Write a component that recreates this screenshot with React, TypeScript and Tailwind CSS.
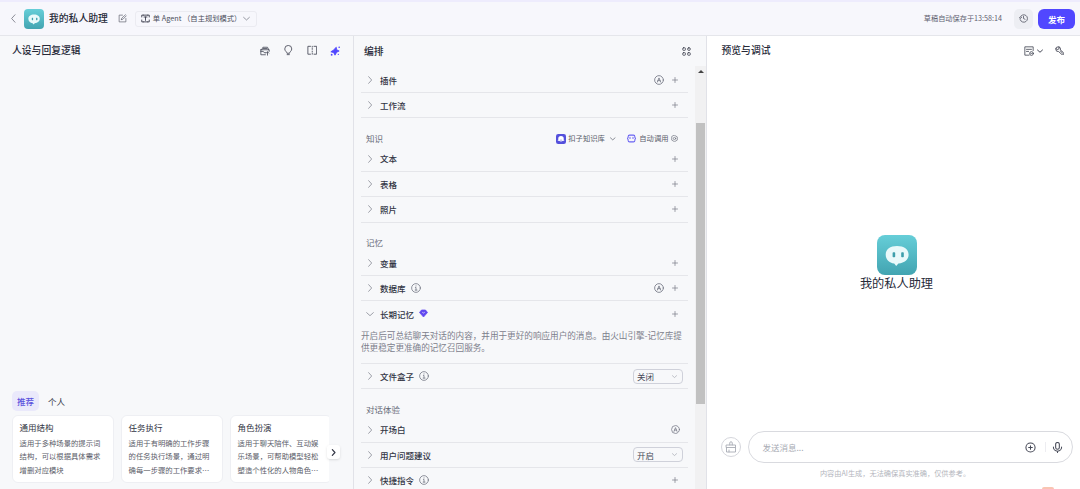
import React, { useState } from 'react';
import clsx from 'clsx';

type RowAction = 'plus' | 'auto' | 'auto-plus' | 'select';

interface SkillRow {
    label: string;
    action: RowAction;
    info?: boolean;
    value?: string;
}

const skillRows: SkillRow[] = [
    { label: '插件', action: 'auto-plus' },
    { label: '工作流', action: 'plus' },
];

const knowledgeRows: SkillRow[] = [
    { label: '文本', action: 'plus' },
    { label: '表格', action: 'plus' },
    { label: '照片', action: 'plus' },
];

const memoryRows: SkillRow[] = [
    { label: '变量', action: 'plus' },
    { label: '数据库', action: 'auto-plus', info: true },
];

const chatRows: SkillRow[] = [
    { label: '开场白', action: 'auto' },
    { label: '用户问题建议', action: 'select', value: '开启' },
    { label: '快捷指令', action: 'plus', info: true },
];

const templates = [
    { title: '通用结构', lines: ['适用于多种场景的提示词', '结构，可以根据具体需求', '增删对应模块'] },
    { title: '任务执行', lines: ['适用于有明确的工作步骤', '的任务执行场景，通过明', '确每一步骤的工作要求…'] },
    { title: '角色扮演', lines: ['适用于聊天陪伴、互动娱', '乐场景，可帮助模型轻松', '塑造个性化的人物角色…'] },
];

interface IconProps {
    size?: number;
    width?: number;
    className?: string;
    children: React.ReactNode;
}

function Icon({ size = 10, width = 1.8, className, children }: IconProps) {
    return (
        <svg
            width={size}
            height={size}
            viewBox="0 0 24 24"
            fill="none"
            stroke="currentColor"
            strokeWidth={width}
            strokeLinecap="round"
            strokeLinejoin="round"
            className={clsx('shrink-0', className)}
        >
            {children}
        </svg>
    );
}

function Chevron({ dir, size = 8, width = 2, className }: { dir: 'left' | 'right' | 'down'; size?: number; width?: number; className?: string }) {
    const paths = { left: 'M16 2 7 12l9 10', right: 'M8 2l9 10-9 10', down: 'M2 8l10 9 10-9' };
    return <Icon size={size} width={width} className={className}><path d={paths[dir]} /></Icon>;
}

function PlusIcon() {
    return <Icon size={6} width={3} className="text-[#7d808c]"><path d="M12 2v20M2 12h20" /></Icon>;
}

function AutoIcon({ size = 10 }: { size?: number }) {
    return (
        <Icon size={size} width={2} className="text-[#747784]">
            <circle cx="12" cy="12" r="10.5" />
            <path d="M8 17l4-10 4 10M9.5 13.5h5" />
        </Icon>
    );
}

function InfoIcon() {
    return (
        <Icon size={10} width={1.9} className="text-[#747784]">
            <circle cx="12" cy="12" r="10.5" />
            <path d="M10.5 10.5H12V17M10 17h4.5M12 6.8v.4" />
        </Icon>
    );
}

// Logo do assistente: balão com dois olhos
function BotLogo({ size, id }: { size: number; id: string }) {
    return (
        <svg width={size} height={size} viewBox="0 0 40 40" className="shrink-0">
            <defs>
                <linearGradient id={id} x1="0" y1="0" x2="0" y2="1">
                    <stop offset="0" stopColor="#66ced8" />
                    <stop offset="1" stopColor="#42a4b1" />
                </linearGradient>
            </defs>
            <rect width="40" height="40" rx="8" fill={`url(#${id})`} />
            <path d="M20 11c-6.800 0-11.300 3.400-11.300 8.700 0 4.900 3.600 8.100 8.500 8.800l2 2.400 2.200-2.400c6.200-.6 10.200-3.900 10.200-8.800 0-5.300-4.600-8.700-11.600-8.700z" fill="#e9f9fa" />
            <rect x="15.600" y="17.300" width="2.600" height="5" rx=".8" fill="#3d9eab" />
            <rect x="24.200" y="17.300" width="2.600" height="5" rx=".8" fill="#3d9eab" />
        </svg>
    );
}

function Select({ value }: { value: string }) {
    return (
        <button className="mr-[5px] flex h-[15px] w-[50px] items-center justify-between rounded-[4px] border border-[#cfd1da] pr-[5px] pl-[3px] text-[8.5px] text-[#464957]">
            {value}
            <Chevron dir="down" size={5} width={2.5} className="text-[#8b8e9a]" />
        </button>
    );
}

function Row({ row }: { row: SkillRow }) {
    return (
        <div className="flex h-[25.3px] shrink-0 items-center border-b border-[#e5e6ea] pl-[5px]">
            <Chevron dir="right" className="text-[#70737f]" />
            <span className="ml-[6px] text-[8.5px] font-medium text-[#323544]">{row.label}</span>
            {row.info && <span className="ml-[5px]"><InfoIcon /></span>}
            <div className="ml-auto flex items-center">
                {row.action === 'select' && <Select value={row.value ?? ''} />}
                {row.action === 'auto' && <span className="mr-2"><AutoIcon size={9} /></span>}
                {row.action === 'auto-plus' && <span className="mr-2"><AutoIcon /></span>}
                {(row.action === 'plus' || row.action === 'auto-plus') && <span className="mr-[10px]"><PlusIcon /></span>}
            </div>
        </div>
    );
}

function SectionTitle({ title, children }: { title: string; children?: React.ReactNode }) {
    return (
        <div className="flex h-[28.2px] shrink-0 items-center pt-[12px] pl-[5px] text-[8.5px] text-[#666977]">
            {title}
            {children}
        </div>
    );
}

function Header() {
    return (
        <header className="flex h-[36px] shrink-0 items-center border-t-2 border-b border-t-[#eeecfd] border-b-[#e5e6eb] bg-[#f7f7fc] pl-[9px] pr-[5px]">
            <Chevron dir="left" size={9} width={2} className="text-[#676a76]" />
            <div className="ml-[6px]"><BotLogo size={20} id="logo-header" /></div>
            <h1 className="ml-[5px] text-[9.800px] font-medium text-[#262938]">我的私人助理</h1>
            <Icon size={9} width={2} className="ml-[10px] text-[#6b6e7a]">
                <path d="M12 3H3v18h18v-9M9 15l1-4 10-9M9 15l4-1 9-9" />
            </Icon>
            <button className="ml-[8px] flex h-[16px] w-[122px] items-center rounded-[3px] border border-[#ebebf1] pl-[5px] text-[7.300px] whitespace-pre text-[#4b4e5b]">
                <Icon size={9} width={2.300} className="text-[#343746]">
                    <path d="M6 3H2v5M18 3h4v5M2 16v5h4M22 16v5h-4M6 3h12M6 21h12M12 8v9M8 8h8" />
                </Icon>
                <span className="ml-[3px]">单 Agent （自主规划模式）</span>
                <Chevron dir="down" size={7} width={2.3} className="ml-[2px] text-[#676a76]" />
            </button>
            <span className="ml-auto text-[7.200px] text-[#5f6270]">草稿自动保存于13:58:14</span>
            <button className="ml-[12px] flex h-[20px] w-[19px] items-center justify-center rounded-[5px] bg-[#edeef3] text-[#555865]">
                <Icon size={9} width={2.200}>
                    <path d="M3 9a10 10 0 1 1 0 6M1 10l3 2 3-3M12 6.500V12l4 2" />
                </Icon>
            </button>
            <button className="ml-[5px] h-[20px] w-[37px] rounded-[6px] bg-[#5147ff] text-[8.500px] leading-[18px] font-bold text-white">发布</button>
        </header>
    );
}

function PromptPanel() {
    const [tab, setTab] = useState('推荐');

    return (
        <section className="flex w-[354px] shrink-0 flex-col border-r border-[#e1e2e8]">
            <div className="flex h-[29px] items-center pr-[13px] pl-[12px]">
                <h2 className="text-[9.800px] font-medium text-[#262938]">人设与回复逻辑</h2>
                <div className="ml-auto flex items-center gap-[13px] text-[#4b4e5b]">
                    <Icon size={10} width={2}>
                        <path d="M4 9 7 3h11l3 6M2 9h20v4M2 9v12h11M2 13h6l2 3h4M18 22v-8M15 17l3-3 3 3M8 6h9" />
                    </Icon>
                    <Icon size={10.500} width={2}>
                        <path d="M9 18c0-3-5-4-5-9a8 8 0 0 1 16 0c0 5-5 6-5 9zM9.500 22h5" />
                    </Icon>
                    <Icon size={10.500} width={2}>
                        <path d="M8 3H2v18h6M16 3h6v18h-6M12 3v2M12 8v2M12 14v2M12 19v2" />
                    </Icon>
                    <svg width="10" height="10" viewBox="0 0 24 24" fill="#5147ff" className="shrink-0">
                        <path d="M15 3l1 6 6 3-6 3-4 7-3-6-7-2 6-4z" stroke="#5147ff" strokeWidth="2" strokeLinejoin="round" />
                        <circle cx="22" cy="3" r="2" />
                        <circle cx="4" cy="21" r="2.200" />
                        <circle cx="20" cy="20" r="1.600" />
                    </svg>
                </div>
            </div>

            <div className="mt-auto flex pl-[12px] text-[8.500px] leading-[19px]">
                {['推荐', '个人'].map((name) => (
                    <button
                        key={name}
                        onClick={() => setTab(name)}
                        className={clsx(
                            'mr-[4px] h-[20px] w-[27px] rounded-[5px]',
                            tab === name ? 'bg-[#eae9fb] font-medium text-[#5b50dd]' : 'text-[#323544]',
                        )}
                    >
                        {name}
                    </button>
                ))}
            </div>

            <div className="relative mt-[4px] mb-[6px] ml-[11.600px] w-[317px]">
                <div className="flex gap-[7px] overflow-hidden">
                    {templates.map((item) => (
                        <article key={item.title} className="h-[68px] w-[102px] shrink-0 rounded-[6px] border border-[#eeeff3] bg-white pt-[4px] pl-[7px]">
                            <h3 className="text-[8.500px] leading-[14px] text-[#323544]">{item.title}</h3>
                            <div className="mt-[2px] text-[7.350px] leading-[13.400px] whitespace-nowrap text-[#5b5d69]">
                                {item.lines.map((line) => <p key={line}>{line}</p>)}
                            </div>
                        </article>
                    ))}
                </div>
                {/* Botão de avanço sobre o carrossel */}
                <button className="absolute top-[30px] -right-[11px] flex h-[14px] w-[13px] items-center justify-center rounded-[3px] bg-white shadow-sm">
                    <Chevron dir="right" size={7} width={4} className="text-[#343746]" />
                </button>
            </div>
        </section>
    );
}

function ArrangePanel() {
    return (
        <section className="flex w-[353px] shrink-0 flex-col border-r border-[#e1e2e8]">
            <div className="flex h-[30px] shrink-0 items-center justify-between pr-[15px] pl-[10px]">
                <h2 className="text-[9.800px] font-medium text-[#262938]">编排</h2>
                <Icon size={9} width={2.500} className="text-[#4b4e5b]">
                    <rect x="2" y="2" width="7" height="7" rx="2" />
                    <rect x="15" y="2" width="7" height="7" rx="3" />
                    <rect x="2" y="15" width="7" height="7" rx="2" />
                    <rect x="15" y="15" width="7" height="7" rx="2" />
                </Icon>
            </div>
            <div className="flex min-h-0 flex-1">
                <div className="flex flex-1 flex-col overflow-hidden pt-[1.900px] pr-[7px] pl-[7px]">
                    {skillRows.map((row) => <Row key={row.label} row={row} />)}

                    <SectionTitle title="知识">
                        <div className="ml-auto flex items-center pr-[10px] text-[7.300px] text-[#5b5e6b]">
                            <svg width="10" height="10" viewBox="0 0 20 20" className="shrink-0">
                                <rect width="20" height="20" rx="4.500" fill="#5450dc" />
                                <path d="M10 4a5.500 5.500 0 0 0-5.500 5.500V12l-1.500 2 3-.5c2.500 2.200 5.500 2.200 8 0l3 .5-1.500-2V9.500A5.500 5.500 0 0 0 10 4z" fill="#fff" />
                                <path d="M8 11.500c1 1.300 3 1.300 4 0" stroke="#5450dc" fill="none" />
                            </svg>
                            <span className="ml-[2.500px]">扣子知识库</span>
                            <Chevron dir="down" size={5.500} width={3} className="ml-[5.500px]" />
                            <Icon size={9} width={2.700} className="ml-[11.500px] text-[#6962f2]">
                                <path d="M7 3h10a4 4 0 0 1 4 4v2l2 3-2 3v2a4 4 0 0 1-4 4H7a4 4 0 0 1-4-4v-2l-2-3 2-3V7a4 4 0 0 1 4-4zM8 9v3M16 9v3" />
                            </Icon>
                            <span className="ml-[3px]">自动调用</span>
                            <Icon size={7} width={2.300} className="ml-[2.500px] text-[#696c79]">
                                <path d="M12 1l9.500 5.500v11L12 23l-9.500-5.500v-11z" />
                                <circle cx="12" cy="12" r="4" />
                            </Icon>
                        </div>
                    </SectionTitle>
                    {knowledgeRows.map((row) => <Row key={row.label} row={row} />)}

                    <SectionTitle title="记忆" />
                    {memoryRows.map((row) => <Row key={row.label} row={row} />)}

                    <div className="h-[62.700px] shrink-0 border-b border-[#e5e6ea]">
                        <div className="flex h-[25.300px] items-center pl-[5px]">
                            <Chevron dir="down" className="text-[#70737f]" />
                            <span className="ml-[6px] text-[8.500px] font-medium text-[#323544]">长期记忆</span>
                            <svg width="9" height="9" viewBox="0 0 18 18" className="ml-[5px] shrink-0">
                                <path d="M5 2h8l4 5-8 9-8-9z" fill="#6149f0" stroke="#6149f0" strokeWidth="1.500" strokeLinejoin="round" />
                                <path d="M6.500 6.500l2.500 1.500 2.500-1.500" fill="none" stroke="#fff" strokeWidth="1.300" />
                            </svg>
                            <span className="mr-[10px] ml-auto"><PlusIcon /></span>
                        </div>
                        <p className="mt-[2px] text-[8.600px] leading-[12.500px] whitespace-nowrap text-[#7d808c]">
                            开启后可总结聊天对话的内容，并用于更好的响应用户的消息。由火山引擎-记忆库提
                            <br />
                            供更稳定更准确的记忆召回服务。
                        </p>
                    </div>
                    <Row row={{ label: '文件盒子', action: 'select', info: true, value: '关闭' }} />

                    <SectionTitle title="对话体验" />
                    {chatRows.map((row) => <Row key={row.label} row={row} />)}
                </div>

                {/* Barra de rolagem */}
                <div className="flex w-[11px] shrink-0 flex-col items-center bg-[#f1f1f2]">
                    <svg width="6" height="3" viewBox="0 0 6 3" className="mt-[4px]"><path d="M3 0l3 3H0z" fill="#444" /></svg>
                    <div className="mt-[50px] h-[281px] w-[9px] bg-[#c1c1c1]" />
                </div>
            </div>
        </section>
    );
}

function PreviewPanel() {
    return (
        <section className="flex min-w-0 flex-1 flex-col overflow-hidden bg-white">
            <div className="flex h-[29px] shrink-0 items-center pr-[16px] pl-[14.500px] text-[#464957]">
                <h2 className="mr-auto text-[9.800px] font-medium text-[#262938]">预览与调试</h2>
                <Icon size={10} width={2}>
                    <path d="M22 11V2H2v20h10M6 8h12M6 13h5" />
                    <circle cx="18" cy="18" r="4.500" />
                    <path d="M16.500 18l1.200 1.200 2-2" />
                </Icon>
                <Chevron dir="down" size={6} width={4} className="ml-[3px]" />
                <Icon size={9.500} width={2.200} className="ml-[12px]">
                    <path d="M14 9a6 6 0 1 0-5 5l9 8c3 1 5-1 4-4zM10 2v5l-3 2-5-2M13 12l6 6" />
                </Icon>
            </div>

            <div className="flex flex-1 flex-col items-center pt-[170px] pl-[6px]">
                <BotLogo size={40} id="logo-preview" />
                <p className="text-[12.200px] leading-[17px] text-[#262938]">我的私人助理</p>
            </div>

            <div className="flex shrink-0 items-center pr-[7px] pl-[14px]">
                <button className="flex size-[20px] items-center justify-center rounded-full border border-[#d5d6dc] text-[#a8abb4]">
                    <Icon size={12} width={1.800}>
                        <path d="M9.500 8V4a2.500 2.500 0 0 1 5 0v4M3 8h18v5H3zM3 13v9h18v-9M8 18v4" />
                    </Icon>
                </button>
                <div className="ml-[7px] flex h-[32px] flex-1 items-center rounded-full border border-[#d9dadf] pr-[9px] pl-[13.500px]">
                    <span className="mr-auto text-[8.500px] text-[#a8abb4]">发送消息...</span>
                    <Icon size={11} width={2.300} className="text-[#464957]">
                        <circle cx="12" cy="12" r="10" />
                        <path d="M12 8v8M8 12h8" />
                    </Icon>
                    <div className="ml-[9px] h-[10px] w-px bg-[#ededf1]" />
                    <Icon size={11} width={2.300} className="ml-[6px] text-[#464957]">
                        <rect x="8" y="1" width="8" height="15" rx="4" />
                        <path d="M3 11a9 9 0 0 0 18 0M12 20v3" />
                    </Icon>
                </div>
            </div>
            <p className="mt-[3px] h-[15px] shrink-0 pl-[3px] text-center text-[7.200px] leading-[14px] text-[#b3b5bd]">内容由AI生成，无法确保真实准确，仅供参考。</p>
            <div className="mt-[6px] mr-[26px] h-[2px] w-[12px] shrink-0 self-end rounded-t-full bg-[#f9c5b2]" />
        </section>
    );
}

export default function App() {
    return (
        <div className="flex h-[489px] w-[1080px] flex-col overflow-hidden bg-[#f7f8fa] font-['Noto_Sans_CJK_SC',sans-serif]">
            <Header />
            <main className="flex min-h-0 flex-1">
                <PromptPanel />
                <ArrangePanel />
                <PreviewPanel />
            </main>
        </div>
    );
}
